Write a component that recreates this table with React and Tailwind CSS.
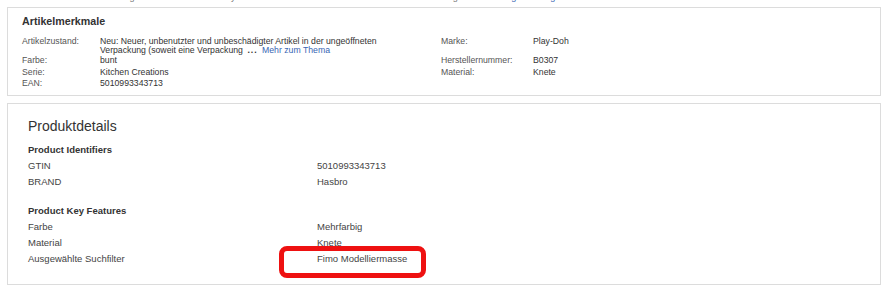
export default function App() {
  const font = { fontFamily: '"Liberation Sans", Arial, sans-serif' };

  return (
    <div className="relative w-[888px] h-[298px] overflow-hidden bg-white" style={font}>
      {/* cut-off line above the boxes */}
      <div className="h-[3px] overflow-hidden pl-[8px]">
        <div className="-mt-[8px] text-[9px] leading-[11px] text-[#777] whitespace-nowrap">
          Der Verkäufer ist für dieses Angebot verantwortlich. eBay-Artikelnummer: 2739 4419 7302 · Letzte Aktualisierung{' '}
          <span className="text-[#3665b3]">Alle Änderungen anzeigen</span>
        </div>
      </div>

      {/* Artikelmerkmale */}
      <div className="mt-[4px] mx-[7px] h-[89px] border border-[#dcdcdc] pl-[14px] pt-[7px]">
        <h3 className="text-[10.7px] leading-[13px] font-bold text-[#333]">Artikelmerkmale</h3>
        <div className="mt-[8px] grid grid-cols-[78px_341px_92px_1fr] text-[8.7px] text-[#333]">
          <div className="leading-[9.5px] h-[19px] pt-[0.5px] text-[#555]">Artikelzustand:</div>
          <div className="leading-[9.5px] h-[19px] pt-[0.5px]">
            Neu: Neuer, unbenutzter und unbeschädigter Artikel in der ungeöffneten
            <br />
            Verpackung (soweit eine Verpackung{' '}
            <b className="ml-[2px] tracking-[1px]">...</b>{' '}
            <span className="ml-[2px] text-[#3665b3]">Mehr zum Thema</span>
          </div>
          <div className="leading-[9.5px] h-[19px] pt-[0.5px] text-[#555]">Marke:</div>
          <div className="leading-[9.5px] h-[19px] pt-[0.5px]">Play-Doh</div>

          <div className="leading-[11.5px] text-[#555]">Farbe:</div>
          <div className="leading-[11.5px]">bunt</div>
          <div className="leading-[11.5px] text-[#555]">Herstellernummer:</div>
          <div className="leading-[11.5px]">B0307</div>

          <div className="leading-[11.5px] text-[#555]">Serie:</div>
          <div className="leading-[11.5px]">Kitchen Creations</div>
          <div className="leading-[11.5px] text-[#555]">Material:</div>
          <div className="leading-[11.5px]">Knete</div>

          <div className="leading-[11.5px] text-[#555]">EAN:</div>
          <div className="leading-[11.5px]">5010993343713</div>
          <div />
          <div />
        </div>
      </div>

      {/* Produktdetails */}
      <div className="mt-[7px] mx-[7px] h-[182px] border border-[#dcdcdc] pl-[20px] pt-[14px] text-[#444]">
        <h2 className="text-[14px] leading-[17px] text-[#333]">Produktdetails</h2>
        <div className="mt-[7px] text-[9.5px] leading-[16px]">
          <div className="font-bold text-[#333]">Product Identifiers</div>
          <div className="grid grid-cols-[289px_1fr]">
            <div>GTIN</div>
            <div>5010993343713</div>
            <div>BRAND</div>
            <div>Hasbro</div>
          </div>
          <div className="mt-[13px] font-bold text-[#333]">Product Key Features</div>
          <div className="grid grid-cols-[289px_1fr]">
            <div>Farbe</div>
            <div>Mehrfarbig</div>
            <div>Material</div>
            <div>Knete</div>
            <div>Ausgewählte Suchfilter</div>
            <div>Fimo Modelliermasse</div>
          </div>
        </div>
      </div>

      {/* red highlight */}
      <div className="absolute left-[279px] top-[246px] w-[147px] h-[32px] border-[5px] border-[#ee1111] rounded-[8px]" />
    </div>
  );
}
